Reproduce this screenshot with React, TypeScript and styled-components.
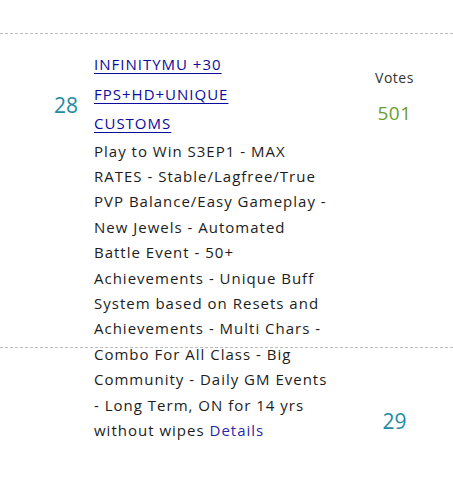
import styled, { createGlobalStyle } from "styled-components"

const GlobalStyle = createGlobalStyle`
  html, body {
    margin: 0;
    padding: 0;
    background: #fff;
  }
  body {
    font-family: "Open Sans", "DejaVu Sans", sans-serif;
    color: #1c1c1c;
  }
`

type Server = {
  rank: number
  title: string
  description: string
  votes: number
}

const servers: Server[] = [
  {
    rank: 28,
    title: "INFINITYMU +30 FPS+HD+UNIQUE CUSTOMS",
    description:
      "Play to Win S3EP1 - MAX RATES - Stable/Lagfree/True PVP Balance/Easy Gameplay - New Jewels - Automated Battle Event - 50+ Achievements - Unique Buff System based on Resets and Achievements - Multi Chars - Combo For All Class - Big Community - Daily GM Events - Long Term, ON for 14 yrs without wipes",
    votes: 501,
  },
]

export default function App() {
  return (
    <>
      <GlobalStyle />
      <List>
        {servers.map((server) => (
          <Row key={server.rank}>
            <Rank>{server.rank}</Rank>
            <Info>
              <Title href="#">{server.title}</Title>
              <Description>
                {server.description} <DetailsLink href="#">Details</DetailsLink>
              </Description>
            </Info>
            <VotesBox>
              <VotesLabel>Votes</VotesLabel>
              <VotesCount>{server.votes}</VotesCount>
            </VotesBox>
          </Row>
        ))}
        <NextRow>
          <NextRank>29</NextRank>
        </NextRow>
      </List>
    </>
  )
}

const List = styled.div`
  padding-top: 33px;
  width: 453px;
`

const Row = styled.div`
  border-top: 1px dashed #bdbdbd;
  height: 313px;
  display: grid;
  grid-template-columns: 94px 242px 1fr;
  position: relative;
`

const Rank = styled.div`
  font-size: 21px;
  color: #1e8ca6;
  text-align: right;
  padding-right: 16px;
  padding-top: 56px;
  line-height: 30px;
`

const Info = styled.div`
  padding-top: 16px;
  position: relative;
  z-index: 1;
`

const Title = styled.a`
  display: block;
  max-width: 170px;
  font-size: 15px;
  letter-spacing: 1px;
  line-height: 29.5px;
  color: #0b0b9e;
  text-decoration: underline;
  text-underline-offset: 3px;
`

const Description = styled.div`
  font-size: 15px;
  letter-spacing: 1px;
  line-height: 25.4px;
  color: #1c1c1c;
`

const DetailsLink = styled.a`
  color: #2828a8;
  text-decoration: none;
`

const VotesBox = styled.div`
  display: flex;
  flex-direction: column;
  align-items: center;
  padding-top: 33px;
`

const VotesLabel = styled.div`
  font-size: 14px;
  letter-spacing: 0.5px;
  color: #333;
  line-height: 22px;
`

const VotesCount = styled.div`
  font-size: 19px;
  letter-spacing: 0.5px;
  color: #6a9e2a;
  line-height: 28px;
  margin-top: 10px;
`

const NextRow = styled.div`
  border-top: 1px dashed #bdbdbd;
  height: 140px;
  display: flex;
  justify-content: flex-end;
`

const NextRank = styled.div`
  font-size: 21px;
  color: #1e8ca6;
  width: 117px;
  text-align: center;
  padding-top: 58px;
  box-sizing: border-box;
  line-height: 30px;
`
